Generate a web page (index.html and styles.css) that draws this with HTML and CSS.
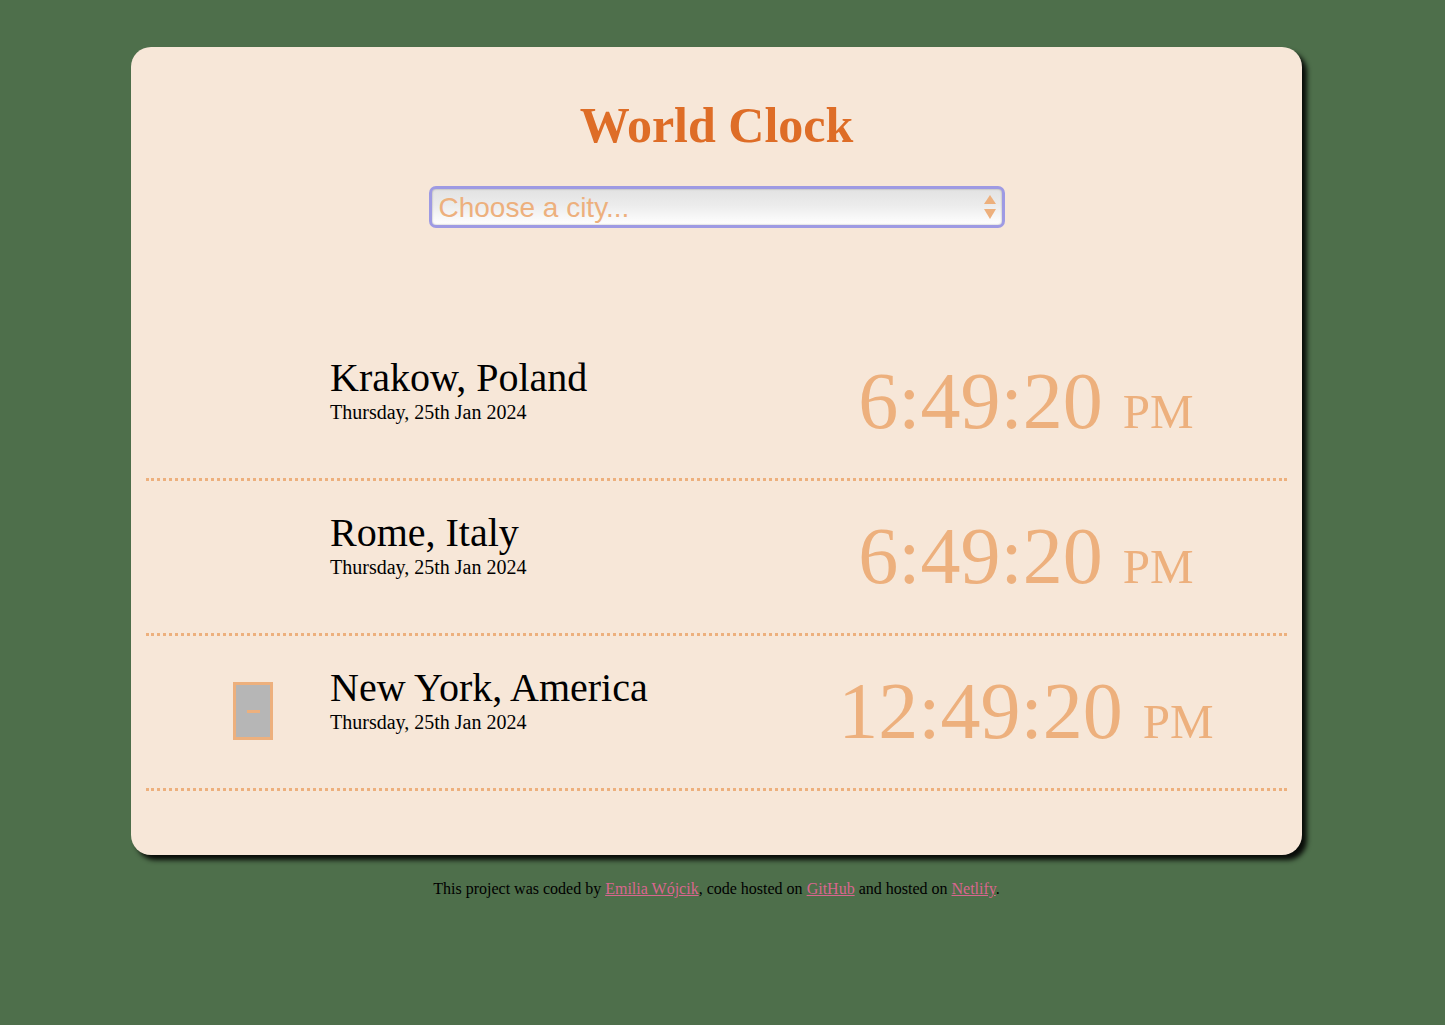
FILE: index.html
```html
<!DOCTYPE html>
<html lang="en">
<head>
<meta charset="utf-8">
<title>World Clock</title>
<link rel="stylesheet" href="styles.css">
</head>
<body>
<div class="page">
  <main class="card">
    <h1 class="title">World Clock</h1>
    <div class="picker">
      <select class="city-select">
        <option>Choose a city...</option>
        <option>Krakow, Poland</option>
        <option>Rome, Italy</option>
        <option>New York, America</option>
      </select>
      <svg class="picker-arrows" width="14" height="28" viewBox="0 0 14 28" aria-hidden="true">
        <path d="M7 2 L13 11 L1 11 Z" fill="#edb07d"/>
        <path d="M1 16 L13 16 L7 26 Z" fill="#edb07d"/>
      </svg>
    </div>
    <div class="cities">
      <div class="city">
        <div class="city-info">
          <div class="city-name">Krakow, Poland</div>
          <div class="city-date">Thursday, 25th Jan 2024</div>
        </div>
        <div class="city-time">6:49:20 <small>PM</small></div>
      </div>
      <div class="city">
        <div class="city-info">
          <div class="city-name">Rome, Italy</div>
          <div class="city-date">Thursday, 25th Jan 2024</div>
        </div>
        <div class="city-time">6:49:20 <small>PM</small></div>
      </div>
      <div class="city">
        <button class="remove" aria-label="Remove"><span class="remove-bar"></span></button>
        <div class="city-info">
          <div class="city-name">New York, America</div>
          <div class="city-date">Thursday, 25th Jan 2024</div>
        </div>
        <div class="city-time">12:49:20 <small>PM</small></div>
      </div>
    </div>
  </main>
  <footer class="footer">This project was coded by <a href="#">Emilia Wójcik</a>, code hosted on <a href="#">GitHub</a> and hosted on <a href="#">Netlify</a>.</footer>
</div>
</body>
</html>
```
FILE: styles.css
```css
html, body {
  margin: 0;
  padding: 0;
}
body {
  background: #4e6f4b;
  font-family: "Liberation Serif", "Times New Roman", serif;
  color: #000;
  min-height: 1025px;
}
.page {
  width: 1171px;
  margin-left: 131px;
  padding-top: 47px;
}
.card {
  box-sizing: border-box;
  width: 1171px;
  height: 808px;
  padding: 15px;
  background: #f7e7d8;
  border-radius: 20px;
  box-shadow: 5px 5px 5px rgba(0, 0, 0, 0.9);
}
.title {
  margin: 35px 0 32px;
  font-size: 50px;
  font-weight: bold;
  line-height: 57px;
  text-align: center;
  color: #de6d27;
}
.picker {
  position: relative;
  width: 576px;
  height: 42px;
  margin: 0 auto;
}
.city-select {
  -webkit-appearance: none;
  appearance: none;
  box-sizing: border-box;
  width: 576px;
  height: 42px;
  padding: 0 30px 0 7px;
  border: 3px solid #9e9ae3;
  border-radius: 7px;
  background: linear-gradient(#e2e2e2, #ececec 45%, #ffffff);
  box-shadow: inset 0 0 2px rgba(0, 0, 0, 0.35);
  font-family: "Liberation Sans", Arial, sans-serif;
  font-size: 28px;
  color: #edb07d;
  outline: none;
}
.picker-arrows {
  position: absolute;
  right: 8px;
  top: 7px;
  pointer-events: none;
}
.cities {
  margin-top: 98px;
}
.city {
  display: grid;
  grid-template-columns: 184px 435px 1fr;
  align-items: start;
  padding: 29px 0 31px;
  border-bottom: 3px dotted #edb07d;
}
.city-info {
  grid-column: 2;
}
.city-name {
  font-size: 40px;
  line-height: 46px;
}
.city-date {
  font-size: 20px;
  line-height: 22px;
}
.city-time {
  grid-column: 3;
  height: 92px;
  font-size: 80px;
  line-height: 92px;
  text-align: center;
  color: #edb07d;
}
.city-time small {
  font-size: 49px;
  line-height: 1;
}
.remove {
  grid-column: 1;
  grid-row: 1;
  align-self: center;
  box-sizing: border-box;
  width: 40px;
  height: 58px;
  margin: 0 0 0 87px;
  padding: 0;
  border: 3px solid #edb07d;
  background: #b6b6b6;
  display: flex;
  align-items: center;
  justify-content: center;
}
.remove-bar {
  display: block;
  width: 13px;
  height: 3px;
  background: #edb07d;
}
.footer {
  margin-top: 25px;
  font-size: 16px;
  line-height: 18px;
  text-align: center;
}
.footer a {
  color: #d9668f;
}
```
